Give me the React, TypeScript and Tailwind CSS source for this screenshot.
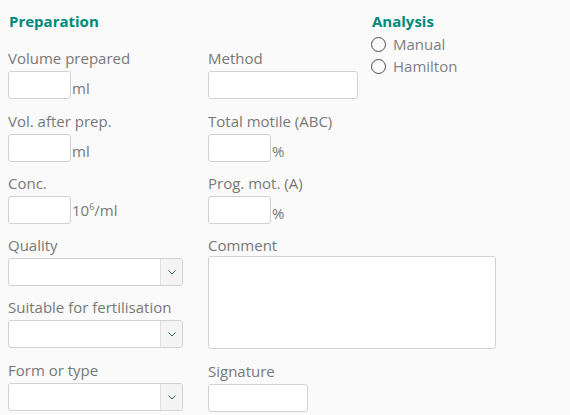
import React from 'react';

const labelCls = 'block text-[15px] leading-5 text-[#787878]';
const inputCls = 'h-[28px] rounded-[3px] border border-[#d2d2d2] bg-white';

function Unit({ children }: { children: React.ReactNode }) {
  return <span className="ml-px pb-[1px] text-[15px] leading-5 text-[#787878]">{children}</span>;
}

function SmallField({ label, unit, className }: { label: string; unit: React.ReactNode; className: string }) {
  return (
    <div className={className}>
      <label className={labelCls}>{label}</label>
      <div className="mt-[3px] flex items-end">
        <div className={`${inputCls} w-[63px]`} />
        <Unit>{unit}</Unit>
      </div>
    </div>
  );
}

function SelectField({ label, className }: { label: string; className: string }) {
  return (
    <div className={className}>
      <label className={labelCls}>{label}</label>
      <div className="mt-[3px] flex h-[28px] w-[175px] overflow-hidden rounded-[3px] border border-[#d2d2d2] bg-white">
        <div className="flex-1" />
        <div className="flex w-[22px] items-center justify-center border-l border-[#e0e0e0] bg-[#f4f4f4]">
          <svg width="8" height="5" viewBox="0 0 8 5" fill="none">
            <path d="M0.5 0.5 L4 4 L7.5 0.5" stroke="#355e5a" strokeWidth="1" />
          </svg>
        </div>
      </div>
    </div>
  );
}

function Radio({ label }: { label: string }) {
  return (
    <div className="flex h-[22px] items-center">
      <span className="h-[15px] w-[15px] rounded-full border-[1.5px] border-[#4a4a4a] bg-[#fafafa]" />
      <span className="ml-[7px] text-[15px] leading-5 text-[#808080]">{label}</span>
    </div>
  );
}

export default function App() {
  return (
    <div
      className="flex h-[415px] w-[570px] overflow-hidden bg-[#fafafa] px-2"
      style={{ fontFamily: '"Open Sans", sans-serif' }}
    >
      {/* Preparation */}
      <div className="w-[200px] shrink-0">
        <h2 className="pl-px pt-[11px] text-[15px] font-bold leading-5 text-[#00897b]">Preparation</h2>
        <SmallField className="mt-[17px]" label="Volume prepared" unit="ml" />
        <SmallField className="mt-[12px]" label="Vol. after prep." unit="ml" />
        <SmallField
          className="mt-[11px]"
          label="Conc."
          unit={
            <>
              10<span className="relative -top-[6px] text-[9px]">6</span>/ml
            </>
          }
        />
        <SelectField className="mt-[11px]" label="Quality" />
        <SelectField className="mt-[11px]" label="Suitable for fertilisation" />
        <SelectField className="mt-[12px]" label="Form or type" />
      </div>

      {/* Method column */}
      <div className="w-[163px] shrink-0">
        <div className="mt-[48px]">
          <label className={labelCls}>Method</label>
          <div className={`${inputCls} mt-[3px] w-[150px]`} />
        </div>
        <SmallField className="mt-[12px]" label="Total motile (ABC)" unit="%" />
        <SmallField className="mt-[11px]" label="Prog. mot. (A)" unit="%" />
        <div className="mt-[11px]">
          <label className={labelCls}>Comment</label>
          <div className="mt-px h-[93px] w-[288px] rounded-[3px] border border-[#d2d2d2] bg-white" />
        </div>
        <div className="mt-[12px]">
          <label className={labelCls}>Signature</label>
          <div className={`${inputCls} mt-[3px] w-[100px]`} />
        </div>
      </div>

      {/* Analysis */}
      <div className="flex-1">
        <h2 className="pl-px pt-[11px] text-[15px] font-bold leading-5 text-[#00897b]">Analysis</h2>
        <div className="mt-[2px]">
          <Radio label="Manual" />
          <Radio label="Hamilton" />
        </div>
      </div>
    </div>
  );
}
